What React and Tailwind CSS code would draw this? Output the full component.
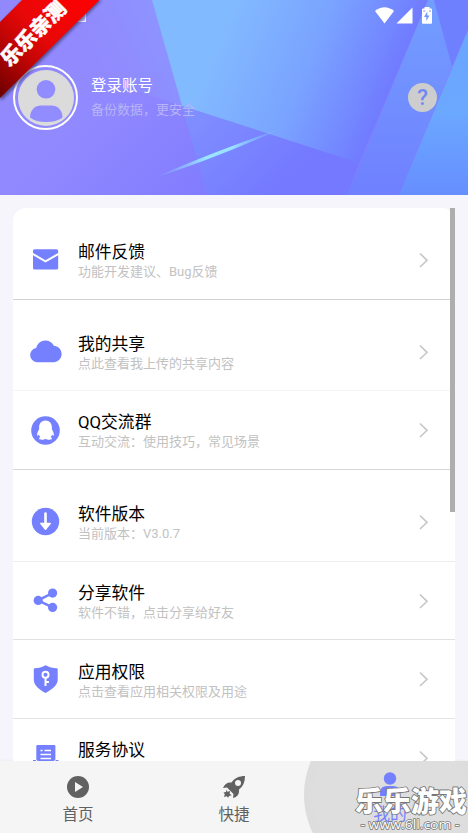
import clsx from "clsx";

const groups = [
  [{ icon: "mail", title: "邮件反馈", desc: "功能开发建议、Bug反馈", line: "border-[#d2d2d2]" }],
  [
    { icon: "cloud", title: "我的共享", desc: "点此查看我上传的共享内容", line: "border-[#f5f5f5]" },
    { icon: "qq", title: "QQ交流群", desc: "互动交流：使用技巧，常见场景", line: "border-[#d8d8d8]" },
  ],
  [
    { icon: "download", title: "软件版本", desc: "当前版本：V3.0.7", line: "border-[#ededed]" },
    { icon: "share", title: "分享软件", desc: "软件不错，点击分享给好友", line: "border-[#e2e2e2]" },
    { icon: "shield", title: "应用权限", desc: "点击查看应用相关权限及用途", line: "border-[#e4e4e4]" },
    { icon: "doc", title: "服务协议", desc: "", line: "border-[#e4e4e4]" },
  ],
];

const icons = {
  mail: (
    <>
      <path d="M5.5 6.3h22a1.7 1.7 0 0 1 1.700 1.700v1.900L16.500 17.200 4 9.900V8a1.700 1.700 0 0 1 1.500-1.700z" />
      <path d="M4 12.200l12.500 7.300 12.700-7.300v12.700a1.700 1.700 0 0 1-1.700 1.700h-22A1.600 1.600 0 0 1 4 25z" />
    </>
  ),
  cloud: (
    <path d="M7.800 27.200a7.100 7.100 0 0 1-.6-14.100C8.200 8.600 12 5.500 16.300 5.500c4.100 0 6.900 2 8.500 5.300 4.400.2 7.800 3.800 7.800 8.200 0 4.600-3.600 8.200-8 8.200z" />
  ),
  qq: (
    <>
      <circle cx="16.500" cy="16.500" r="14.300" />
      <path
        fill="#fff"
        d="M16.500 6.500c-4 0-6.400 2.900-6.400 7v2.100c-1.200 1.800-2.100 3.700-2 5.700.1.800 1 .2 1.800-.9.3 1.200.8 2 1.500 2.800-1 .4-1.600 1-1.300 1.600.6 1.300 5 1 6.400-.1 1.500 1.100 5.900 1.400 6.400.1.3-.6-.3-1.200-1.300-1.600.7-.8 1.200-1.600 1.500-2.800.8 1.100 1.700 1.700 1.800.9.100-2-.8-3.900-2-5.700v-2.100c0-4.100-2.400-7-6.400-7z"
      />
    </>
  ),
  download: (
    <>
      <circle cx="16.500" cy="16.500" r="13.700" />
      <path fill="#fff" d="M15.200 8.500a1.300 1.300 0 0 1 2.600 0v9.200h3.400c.8 0 1 .8.500 1.300l-4.400 5.400a1 1 0 0 1-1.600 0l-4.400-5.400c-.5-.6-.2-1.300.5-1.300h3.400z" />
    </>
  ),
  share: (
    <>
      <path d="M9 16.400l14.500-7.300M9 16.400l14.500 7" stroke="#7580ff" strokeWidth="2.400" />
      <circle cx="9.200" cy="16.400" r="4.600" />
      <circle cx="23.600" cy="9.100" r="4.600" />
      <circle cx="23.600" cy="23.400" r="4.600" />
    </>
  ),
  shield: (
    <>
      <path d="M16.500 2.300c3.500 2 7.500 2.900 11 2.900.7 0 1.200.4 1.200 1.200v10.600c0 5-6 10-12.200 12.900C10.300 27 4.800 22 4.800 17V6.400c0-.8.500-1.200 1.200-1.200 3.500 0 7.200-.9 10.500-2.900z" />
      <g fill="none" stroke="#fff" strokeWidth="2">
        <circle cx="16.500" cy="11.700" r="3" />
        <path d="M16.500 14.700v8.300M16.500 19h3.400" />
      </g>
    </>
  ),
  doc: (
    <>
      <path d="M8.500 4h16.800c.6 0 1.100.5 1.100 1.100v13.500l-2.600 2.400H9.700l-2.400-2.400V5.100c0-.6.600-1.100 1.200-1.100zM4 19h3v2H4zM26.500 19h3v2h-3z" />
      <path d="M11.500 9.400h2M15.500 9.400h6.500M11.500 13.400H22M11.500 17.400H22" stroke="#fff" strokeWidth="1.500" />
    </>
  ),
};

function HeaderArt() {
  return (
    <svg className="absolute inset-0" width="468" height="195" viewBox="0 0 468 195">
      <defs>
        <linearGradient id="base" gradientUnits="userSpaceOnUse" x1="0" y1="0" x2="200" y2="195">
          <stop offset="0" stopColor="#9189fb" />
          <stop offset="0.5" stopColor="#9189ff" />
          <stop offset="1" stopColor="#827dff" />
        </linearGradient>
        <linearGradient id="sky" gradientUnits="userSpaceOnUse" x1="215" y1="45" x2="385" y2="115">
          <stop offset="0" stopColor="#82baff" />
          <stop offset="0.5" stopColor="#7aa4ff" />
          <stop offset="1" stopColor="#7079ff" />
        </linearGradient>
        <linearGradient id="low" gradientUnits="userSpaceOnUse" x1="190" y1="110" x2="270" y2="195">
          <stop offset="0" stopColor="#8090ff" />
          <stop offset="1" stopColor="#7479ff" />
        </linearGradient>
        <linearGradient id="haze" gradientUnits="userSpaceOnUse" x1="90" y1="70" x2="180" y2="30">
          <stop offset="0" stopColor="#8f91ff" stopOpacity="0" />
          <stop offset="1" stopColor="#8c96ff" />
        </linearGradient>
        <linearGradient id="stripe" x1="0" y1="0" x2="0" y2="1">
          <stop offset="0" stopColor="#729eff" />
          <stop offset="1" stopColor="#7080ff" />
        </linearGradient>
        <linearGradient id="edge" x1="0" y1="0" x2="0" y2="1">
          <stop offset="0" stopColor="#6aa5ff" />
          <stop offset="0.5" stopColor="#6ba8ff" />
          <stop offset="1" stopColor="#668eff" />
        </linearGradient>
        <linearGradient id="ray" gradientUnits="userSpaceOnUse" x1="154" y1="177" x2="285" y2="127">
          <stop offset="0" stopColor="#84d8ff" stopOpacity="0" />
          <stop offset="0.4" stopColor="#9be5ff" />
          <stop offset="0.6" stopColor="#9be0ff" />
          <stop offset="0.75" stopColor="#84c8ff" stopOpacity="0.7" />
          <stop offset="1" stopColor="#84c8ff" stopOpacity="0" />
        </linearGradient>
      </defs>
      <rect width="468" height="195" fill="url(#base)" />
      <path d="M60 0H152L182 106L70 70z" fill="url(#haze)" />
      <path d="M152 0H428L359 163L182 106z" fill="url(#sky)" />
      <path d="M182 106L359 163L347 195H207z" fill="url(#low)" />
      <path d="M428 0H434L452 66L399 195H347z" fill="url(#stripe)" />
      <path d="M434 0H468V30L452 66z" fill="#6f80ff" />
      <path d="M468 30V195H399z" fill="url(#edge)" />
      <path d="M154 178Q207 154 285 127Q214 159 154 178z" fill="url(#ray)" />
    </svg>
  );
}

function StatusIcons() {
  return (
    <svg className="absolute left-[374px] top-[6px]" width="60" height="20" viewBox="0 0 60 20">
      <g fill="#fff">
        <path d="M1 5Q10.500-2.500 20 5L10.500 17.500z" />
        <path d="M38.500 1.500V17.500H22.500z" />
        <path d="M50.500 1h5v1.500h1.500q1 0 1 1V17q0 .7-1 .7h-8q-1 0-1-.7V3.500q0-1 1-1h1.500z" />
      </g>
      <path d="M53.300 5.500L50 11h2.300v4l3.200-5.500h-2.200zM49.300 4.500h2v1h-2zM55 4.500h2v1h-2z" fill="#729aff" />
    </svg>
  );
}

function Ribbon() {
  return (
    <svg className="absolute left-0 top-0" width="104" height="104" viewBox="0 0 104 104">
      <defs>
        <linearGradient id="red" gradientUnits="userSpaceOnUse" x1="0" y1="95" x2="95" y2="0">
          <stop offset="0" stopColor="#700000" />
          <stop offset="0.35" stopColor="#c50505" />
          <stop offset="0.55" stopColor="#e80808" />
          <stop offset="1" stopColor="#ff0000" />
        </linearGradient>
        <filter id="soft">
          <feGaussianBlur stdDeviation="1.500" />
        </filter>
      </defs>
      <path d="M0 24L24 0H102L2 100L0 99z" fill="#3d3565" opacity="0.7" filter="url(#soft)" />
      <path d="M0 22L22 0H99.500L0 98z" fill="url(#red)" />
      <text
        x="33.500"
        y="33.500"
        textAnchor="middle"
        dominantBaseline="central"
        transform="rotate(-45 33.500 33.500)"
        fill="#fff"
        stroke="#fff"
        strokeWidth="0.500"
        fontSize="20.500"
        fontWeight="900"
      >
        乐乐亲测
      </text>
    </svg>
  );
}

function Row({ item }) {
  return (
    <div className={clsx("flex h-[78.700px] items-center border-b pl-4", item.line)}>
      <svg width="33" height="33" viewBox="0 0 33 33" fill="#7580ff" className="shrink-0">
        {icons[item.icon]}
      </svg>
      <div className="ml-4 flex-1 pt-[4.500px]">
        <div className="text-[16.800px] leading-[20px] text-black">{item.title}</div>
        <div className="h-5 text-[13px] leading-[20px] text-[#c2c2c2]">{item.desc}</div>
      </div>
      <svg width="12" height="18" viewBox="0 0 12 18" className="mr-[25px]">
        <path d="M2 2.500L9 9.300L2 16" fill="none" stroke="#c8c8c8" strokeWidth="1.700" />
      </svg>
    </div>
  );
}

function Watermark() {
  return (
    <svg className="absolute left-[350px] top-[780px]" width="118" height="53" viewBox="0 0 118 53">
      <g textAnchor="middle" fill="#fff" stroke="#777" paintOrder="stroke" strokeLinejoin="round">
        <text x="61" y="32" fontSize="28" fontWeight="900" strokeWidth="1.800">
          乐乐游戏
        </text>
        <text
          x="60"
          y="48.500"
          fontSize="13"
          strokeWidth="1.500"
          textLength="99"
          lengthAdjust="spacingAndGlyphs"
          className="font-['Open_Sans']"
        >
          - www.6ll.com -
        </text>
      </g>
    </svg>
  );
}

export default function App() {
  return (
    <div className="relative flex h-[833px] w-[468px] flex-col overflow-hidden bg-[#f6f5fb] font-[Roboto,'Noto_Sans_CJK_SC',sans-serif]">
      <header className="relative h-[195px] shrink-0">
        <HeaderArt />
        <span className="absolute left-[78px] top-[12px] h-[10px] w-[8px] border border-white/80 bg-white/40" />
        <StatusIcons />
        <div className="relative flex items-center pl-[13px] pr-[31px] pt-[65px]">
          <div className="flex size-[65px] items-center justify-center rounded-full border-2 border-white">
            <svg width="56" height="56" viewBox="0 0 56 56">
              <circle cx="28" cy="28" r="28" fill="#dbdbdb" />
              <circle cx="28" cy="19.300" r="9.300" fill="#918cff" />
              <path d="M12 47.500C12 40 17 35.500 23 35.500h10.500c6 0 11 4.500 11 12C40.500 50.500 35 52 28 52s-12-1.500-16-4.500z" fill="#918cff" />
            </svg>
          </div>
          <div className="ml-[13px] flex-1">
            <div className="text-[15.500px] leading-[23px] text-white">登录账号</div>
            <div className="text-[13px] leading-[23px] text-[#b8b4f5]">备份数据，更安全</div>
          </div>
          <div className="flex size-[29px] items-center justify-center rounded-full bg-[#cdcdcd]">
            <span className="text-[22px] font-medium leading-none text-[#7088f5]">?</span>
          </div>
        </div>
      </header>

      <main className="relative mx-[13px] mt-[13px] min-h-0 flex-1 overflow-hidden rounded-t-[13px] bg-white">
        {groups.map((rows, i) => (
          <section key={i} className="pt-[13px]">
            {rows.map((item) => (
              <Row key={item.title} item={item} />
            ))}
          </section>
        ))}
      </main>
      {/* scroll thumb */}
      <div className="absolute left-[450px] top-[208px] h-[304px] w-[5px] bg-[#aeaeae]" />

      <nav className="grid h-[72px] shrink-0 grid-cols-3 overflow-hidden bg-[#f5f5f5] text-[15.500px] leading-[20px] text-[#616161] shadow-[0_-1px_2px_rgba(0,0,0,0.04)]">
        <div className="flex flex-col items-center pt-[14px]">
          <svg width="24" height="24" viewBox="0 0 24 24">
            <circle cx="12" cy="12" r="11" fill="#616161" />
            <path d="M9 7L17 12L9 17z" fill="#f5f5f5" />
          </svg>
          <span className="mt-[6px]">首页</span>
        </div>
        <div className="flex flex-col items-center pt-[14px]">
          <svg width="24" height="24" viewBox="0 0 24 24">
            <path
              d="M23 1C17.500 1 12.500 3 9.500 7.500 5.500 7 2.500 9 1 13l4-.500 6.500 6.500-.500 4c4.500-1 6.500-4 6-8.500 4-3 6-7.500 6-13.500z"
              fill="#616161"
            />
            <circle cx="16" cy="8" r="3" fill="#f5f5f5" />
            <path d="M4.500 14.500l.8 2.300 2.700-.8-.3 2.700 2 1.500-2.700.8-.8 1.800-1.500-1.600-2.700.8.8-2.800-1.300-1.700 2.500-.5z" fill="#616161" />
          </svg>
          <span className="mt-[6px]">快捷</span>
        </div>
        <div className="relative flex flex-col items-center pt-[10px] text-[16.800px] text-[#7580ff]">
          <div className="absolute left-[-8px] top-[-52px] size-[172px] rounded-full bg-[radial-gradient(circle,#dedede_0%,#dedede_60%,#d8d8d8_100%)]" />
          <svg className="relative" width="24" height="26" viewBox="0 0 24 26">
            <circle cx="12" cy="7.500" r="6.200" fill="#7580ff" />
            <path d="M2 25v-3q0-7 7-7h6q7 0 7 7v3z" fill="#7580ff" />
          </svg>
          <span className="relative mt-[7px]">我的</span>
        </div>
      </nav>
      <Ribbon />
      <Watermark />
    </div>
  );
}
